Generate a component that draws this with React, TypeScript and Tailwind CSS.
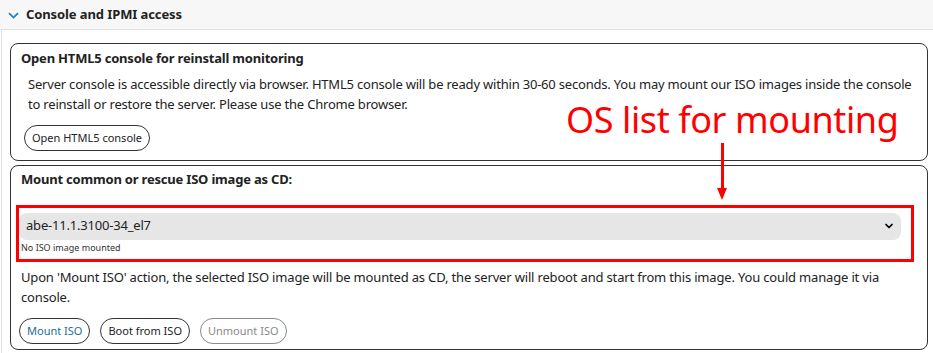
import { ChevronDown } from 'lucide-react';

const font = { fontFamily: '"Noto Sans", "Open Sans", sans-serif' };

function PillButton({ label, tone = 'normal' }: { label: string; tone?: 'normal' | 'active' | 'disabled' }) {
  const colors =
    tone === 'disabled'
      ? 'border-[#8a8a8a] text-[#8a8a8a]'
      : tone === 'active'
        ? 'border-[#333] text-[#1b6e9a]'
        : 'border-[#333] text-[#222]';
  return (
    <button className={`h-[26px] px-[7px] rounded-full border bg-white text-[11px] leading-none ${colors}`}>
      {label}
    </button>
  );
}

export default function App() {
  return (
    <div className="w-[933px] h-[353px] bg-white text-[#222] overflow-hidden relative" style={font}>
      {/* Section header */}
      <div className="h-[30px] flex items-center gap-[7px] pl-[8px] bg-[#f7f7f7] border-b border-[#e2e2e2]">
        <svg width="11" height="7" viewBox="0 0 11 7" className="mt-[1px]">
          <path d="M1 1.2 L5.5 5.6 L10 1.2" fill="none" stroke="#1a7fd4" strokeWidth="1.7" />
        </svg>
        <span className="text-[13px] font-bold tracking-[-0.1px]">Console and IPMI access</span>
      </div>

      <div className="border-l border-[#e2e2e2] ml-[1px] pl-[8px] pr-[5px] pt-[13px] flex flex-col gap-[4px] h-[323px]">
        {/* HTML5 console card */}
        <div className="border border-[#333] rounded-[8px] pl-[10px] pr-[6px] pt-[4px] pb-[9px]">
          <div className="text-[13px] leading-[20px] font-bold tracking-[-0.2px]">
            Open HTML5 console for reinstall monitoring
          </div>
          <p className="mt-[6px] ml-[7px] text-[13px] leading-[20px] tracking-[-0.2px]">
            Server console is accessible directly via browser. HTML5 console will be ready within 30-60 seconds. You may mount our ISO images inside the console to reinstall or restore the server. Please use the Chrome browser.
          </p>
          <div className="mt-[10px] ml-[3px]">
            <PillButton label="Open HTML5 console" />
          </div>
        </div>

        {/* ISO mount card */}
        <div className="border border-[#333] rounded-[8px] pl-[8px] pr-[10px] pt-[3px] pb-[5px]">
          <div className="ml-[2px] text-[13px] leading-[20px] font-bold tracking-[-0.2px]">
            Mount common or rescue ISO image as CD:
          </div>
          <div className="relative mt-[24px] w-[882px]">
            <div className="h-[27px] rounded-[8px] bg-[#e6e6e6] flex items-center justify-between pl-[7px] pr-[6px]">
              <span className="text-[13px] tracking-[-0.2px]">abe-11.1.3100-34_el7</span>
              <ChevronDown className="w-[12px] h-[12px] text-black" strokeWidth={3.5} />
            </div>
            <div className="ml-[2px] mt-[2px] text-[9px] leading-[12px] text-[#333]">No ISO image mounted</div>
            <div className="absolute left-[-3px] top-[-8px] right-[-13px] bottom-[-8px] border-[3px] border-[#ff0000] pointer-events-none" />
          </div>
          <p className="mt-[13px] ml-[2px] mr-[10px] text-[13px] leading-[20px] tracking-[-0.17px]">
            Upon 'Mount ISO' action, the selected ISO image will be mounted as CD, the server will reboot and start from this image. You could manage it via console.
          </p>
          <div className="mt-[11px] flex gap-[10px]">
            <PillButton label="Mount ISO" tone="active" />
            <PillButton label="Boot from ISO" />
            <PillButton label="Unmount ISO" tone="disabled" />
          </div>
        </div>
      </div>

      {/* Annotation */}
      <div className="absolute left-[566px] top-[98px] text-[36px] leading-[44px] text-[#ff0000] tracking-[-0.4px]">
        OS list for mounting
      </div>
      <div className="absolute left-[717px] top-[143px] flex flex-col items-center">
        <div className="w-[3px] h-[46px] bg-[#ff0000]" />
        <svg width="10" height="12" viewBox="0 0 10 12" className="-mt-[1px]">
          <path d="M0 0 L10 0 L5 12 Z" fill="#ff0000" />
        </svg>
      </div>
    </div>
  );
}
